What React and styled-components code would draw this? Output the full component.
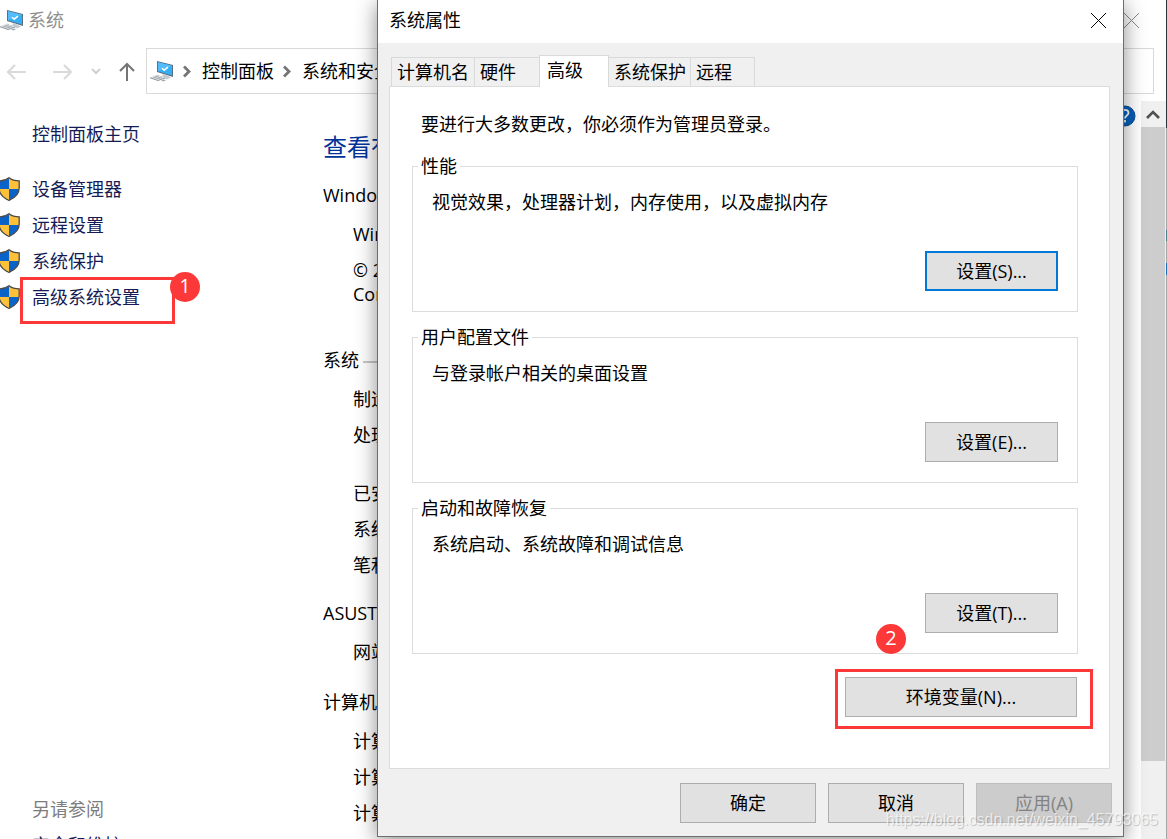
import React from "react";
import styled, { createGlobalStyle, css } from "styled-components";

const GlobalStyle = createGlobalStyle`
  * {
    box-sizing: border-box;
  }

  body {
    margin: 0;
    background: #fff;
    color: #000;
    font-family: "Open Sans", "Noto Sans CJK SC", sans-serif;
    font-size: 18px;
    line-height: 24px;
  }

  button {
    font: inherit;
  }
`;

const Desktop = styled.div`
  position: relative;
  display: flex;
  height: 100vh;
  overflow: hidden;
`;

const ControlPanel = styled.section`
  display: flex;
  flex: 1;
  flex-direction: column;
  min-width: 0;
`;

const DesktopEdge = styled.div`
  width: 1px;
  background: linear-gradient(
    #2c333c 128px,
    #a6a6a6 128px,
    #a6a6a6 230px,
    #4f7f8c 230px,
    #4f7f8c 241px,
    #a6a6a6 241px,
    #a6a6a6 263px,
    #1c6fb8 263px,
    #1c6fb8 275px,
    #a6a6a6 275px
  );
`;

const PanelTitle = styled.header`
  display: flex;
  align-items: center;
  height: 40px;
  padding-right: 26px;
  color: #8e8e8e;

  span {
    flex: 1;
    margin-left: 4px;
  }
`;

const IconButton = styled.button`
  display: flex;
  padding: 0;
  border: none;
  background: none;
  color: ${({ $color }) => $color || "#000"};
`;

const AddressRow = styled.div`
  display: flex;
  align-items: center;
  margin: 8px 12px 7px 0;
`;

const NavButtons = styled.div`
  display: flex;
  align-items: center;
  width: 146px;
  padding-left: 6px;
  gap: 27px;
`;

const HistoryGroup = styled.div`
  display: flex;
  align-items: center;
  gap: 18px;
`;

const AddressBar = styled.nav`
  display: flex;
  flex: 1;
  align-items: center;
  height: 46px;
  padding-left: 3px;
  gap: 9px;
  border: 1px solid #d9d9d9;
  white-space: nowrap;
  overflow: hidden;

  a {
    color: #000;
    text-decoration: none;
  }
`;

const PanelBody = styled.div`
  display: flex;
  flex: 1;
  min-height: 0;
  overflow: hidden;
`;

const Sidebar = styled.aside`
  width: 323px;
  padding-top: 21px;
`;

const SideLink = styled.a`
  display: block;
  padding-left: 32px;
  color: #151c55;
  text-decoration: none;
`;

const TaskList = styled.ul`
  margin: 25px 0 0;
  padding: 0;
  list-style: none;
`;

const Task = styled.li`
  position: relative;
  display: flex;
  align-items: center;
  height: 36px;

  svg {
    flex: none;
    margin-left: -2px;
  }

  a {
    padding-left: 10px;
  }
`;

const TaskMark = styled.span`
  position: absolute;
  top: -2px;
  left: 20px;
  width: 155px;
  height: 47px;
  border: 3px solid #fc3838;
`;

const StepBadge = styled.span`
  position: absolute;
  top: ${({ $top }) => $top}px;
  left: ${({ $left }) => $left}px;
  width: 30px;
  height: 30px;
  border-radius: 50%;
  background: #fc3838;
  color: #fff;
  font-size: 20px;
  line-height: 28px;
  text-align: center;
`;

const SeeAlso = styled.div`
  margin-top: 482px;

  p {
    margin: 0 0 12px;
    padding-left: 32px;
    color: #7d7d7d;
  }
`;

const Details = styled.main`
  position: relative;
  flex: 1;
  min-width: 0;
  padding-top: 30px;
  white-space: nowrap;
  overflow: hidden;
`;

const Heading = styled.h1`
  margin: 0 0 20px;
  color: #003399;
  font-size: 24px;
  font-weight: 400;
  line-height: 32px;
`;

const GroupTitle = styled.h2`
  display: flex;
  align-items: center;
  gap: 4px;
  margin: 0 40px 3px 0;
  font-size: 18px;
  font-weight: 400;

  ${({ $ruled }) =>
    $ruled &&
    css`
      &::after {
        content: "";
        flex: 1;
        height: 2px;
        margin-top: 4px;
        background: #c8c8c8;
      }
    `}
`;

const Group = styled.div`
  margin-bottom: ${({ $after }) => $after}px;
`;

const Detail = styled.p`
  margin: 0 0 0 30px;
  padding-top: ${({ $gap = 12 }) => $gap}px;
`;

const HelpButton = styled(IconButton)`
  position: absolute;
  top: 4px;
  right: 5px;
`;

const Scrollbar = styled.div`
  display: flex;
  flex-direction: column;
  width: 25px;
  padding-right: 1px;
  background: #f0f0f0;
`;

const ScrollUp = styled(IconButton)`
  align-items: center;
  justify-content: center;
  height: 26px;
  padding-top: 2px;
`;

const ScrollTrack = styled.div`
  flex: 1;
`;

const ScrollThumb = styled.div`
  height: 89%;
  background: #cdcdcd;
`;

const Dialog = styled.section`
  position: absolute;
  top: 0;
  left: 377px;
  right: 43px;
  border: 1px solid #6e6e6e;
  border-top: none;
  background: #f0f0f0;
  box-shadow: 0 4px 20px rgba(0, 0, 0, 0.45);
`;

const DialogTitle = styled.header`
  display: flex;
  align-items: center;
  justify-content: space-between;
  height: 43px;
  padding: 0 16px 3px 11px;
  background: #fff;
`;

const TabStrip = styled.div`
  display: flex;
  align-items: flex-end;
  height: 43px;
  padding-left: 13px;
`;

const Tab = styled.button`
  width: ${({ $width }) => $width}px;
  height: 29px;
  padding: 0 0 0 5px;
  border: 1px solid #d9d9d9;
  border-right-width: 0;
  border-bottom: none;
  background: #f0f0f0;
  color: #000;
  text-align: left;
  white-space: nowrap;

  &:last-child {
    border-right-width: 1px;
  }

  ${({ $active }) =>
    $active &&
    css`
      position: relative;
      height: 32px;
      margin-bottom: -1px;
      padding: 0 0 4px 7px;
      border-right-width: 1px;
      background: #fff;

      & + button {
        border-left-width: 0;
      }
    `}
`;

const TabPanel = styled.div`
  margin: 0 13px 0 11px;
  padding: 25px 16px 39px 22px;
  border: 1px solid #dcdcdc;
  background: #fff;
`;

const Notice = styled.p`
  margin: 0 0 18px 9px;
`;

const Section = styled.fieldset`
  min-width: 0;
  margin: 0 15px 13px 0;
  padding: 12px 19px 20px;
  border: 1px solid #dcdcdc;

  legend {
    margin-left: -14px;
    padding: 0 3px;
  }

  p {
    margin: 0 0 37px;
  }
`;

const ButtonRow = styled.div`
  display: flex;
  justify-content: flex-end;
`;

const DialogButtons = styled(ButtonRow)`
  gap: 12px;
  padding: 14px 11px 13px;
`;

const PushButton = styled.button`
  width: ${({ $width }) => $width}px;
  height: 40px;
  padding: 0;
  border: ${({ $focused }) => ($focused ? "2px solid #0078d7" : "1px solid #adadad")};
  background: #e1e1e1;
  color: #000;

  &:disabled {
    border-color: #bfbfbf;
    background: #cccccc;
    color: #838383;
  }
`;

const MarkedArea = styled.div`
  position: relative;
  margin-top: 2px;
  padding: 5px 13px 9px 7px;
  border: 3px solid #fc3838;
`;

const Watermark = styled.div`
  position: absolute;
  right: 9px;
  bottom: 9px;
  color: rgba(255, 255, 255, 0.7);
  font-family: "Liberation Sans", sans-serif;
  font-size: 16px;
  line-height: 20px;
  text-shadow: 1px 1px 1px rgba(0, 0, 0, 0.2);
`;

const ComputerIcon = () => (
  <svg width="24" height="24" viewBox="0 0 24 24" aria-hidden="true">
    <path d="M7 2L23 6V18L7 13Z" fill="#5b6f80" />
    <path d="M8 3.3L22 6.8V16.6L8 12.2Z" fill="#35aef5" />
    <path d="M8 3.3L22 6.8L8 12.2Z" fill="#52bdfa" />
    <path d="M12 9.200L14.200 11.200L18 8.200" fill="none" stroke="#fff" strokeWidth="1.5" />
    <path d="M13 15L17 16.2L21 18.6L17 20.4L12 18Z" fill="#c5cbd0" />
    <path d="M0 18.2L7 15.6L15 18.4L8 21Z" fill="#dfe3e6" />
    <path d="M0 18.2L8 21L15 18.4V19.4L8 22L0 19.2Z" fill="#8b949b" />
    <path d="M3 18.2L10 20M5 17.3L12 19.2M4 19L9 16.4M7 20L12 17.6" stroke="#9fa8af" strokeWidth="0.7" />
    <path d="M11 21.6L14 20.6L16 21.4L13 22.6Z" fill="#a3abb1" />
  </svg>
);

const ShieldIcon = () => (
  <svg width="24" height="26" viewBox="0 0 24 26" aria-hidden="true">
    <path d="M11 13V2C8.5 4 4.5 5 1 5V13Z" fill="#0a63c9" />
    <path d="M11 13V2C13.5 4 17.5 5 21 5V13Z" fill="#ffc03a" />
    <path d="M1 13H11V24.5C5 21.5 1.5 18 1 13Z" fill="#ffc03a" />
    <path d="M21 13H11V24.5C17 21.5 20.5 18 21 13Z" fill="#0a63c9" />
    <path
      d="M11 1.7C8.5 3.7 4.5 4.8 1 4.8V12C1 18 5 21.8 11 24.5C17 21.8 21.2 18 21.2 12V4.8C17.5 4.8 13.5 3.7 11 1.7Z"
      fill="none"
      stroke="#4d4a45"
      strokeWidth="1.3"
    />
  </svg>
);

const Arrow = ({ d, width = 20, color, stroke = 2.2 }) => (
  <svg width={width} height="20" viewBox={`0 0 ${width} 20`} fill="none" aria-hidden="true">
    <path d={d} stroke={color} strokeWidth={stroke} />
  </svg>
);

const Crumb = () => <Arrow width={10} d="M1 5.5L6 10.500L1 15.500" color="#757575" stroke={2.8} />;

const CloseIcon = () => (
  <svg width="17" height="17" viewBox="0 0 17 17" aria-hidden="true">
    <path d="M1 1L16 16M16 1L1 16" stroke="currentColor" strokeWidth="1" />
  </svg>
);

const tasks = ["设备管理器", "远程设置", "系统保护", "高级系统设置"];

const tabs = [
  { label: "计算机名", width: 83 },
  { label: "硬件", width: 65 },
  { label: "高级", width: 70, active: true },
  { label: "系统保护", width: 81 },
  { label: "远程", width: 65 },
];

const sections = [
  { title: "性能", text: "视觉效果，处理器计划，内存使用，以及虚拟内存", button: "设置(S)...", focused: true },
  { title: "用户配置文件", text: "与登录帐户相关的桌面设置", button: "设置(E)..." },
  { title: "启动和故障恢复", text: "系统启动、系统故障和调试信息", button: "设置(T)..." },
];

const SystemWindow = () => (
  <ControlPanel>
    <PanelTitle>
      <ComputerIcon />
      <span>系统</span>
      <IconButton $color="#888" aria-label="关闭系统">
        <CloseIcon />
      </IconButton>
    </PanelTitle>
    <AddressRow>
      <NavButtons>
        <IconButton aria-label="后退">
          <Arrow d="M20 11H2M9 4L2 11L9 18" color="#dadada" />
        </IconButton>
        <HistoryGroup>
          <IconButton aria-label="前进">
            <Arrow d="M0 11H18M11 4L18 11L11 18" color="#dadada" />
          </IconButton>
          <IconButton aria-label="最近位置">
            <Arrow width={10} d="M1 8L5 12L9 8" color="#d0d0d0" stroke={2} />
          </IconButton>
          <IconButton aria-label="向上">
            <Arrow width={16} d="M8 20V3M1 10L8 3L15 10" color="#757575" stroke={2} />
          </IconButton>
        </HistoryGroup>
      </NavButtons>
      <AddressBar>
        <ComputerIcon />
        <Crumb />
        <a href="#control-panel">控制面板</a>
        <Crumb />
        <a href="#security">系统和安全</a>
      </AddressBar>
    </AddressRow>
    <PanelBody>
      <Sidebar>
        <SideLink href="#home">控制面板主页</SideLink>
        <TaskList>
          {tasks.map((task, i) => (
            <Task key={task}>
              <ShieldIcon />
              <SideLink href={`#task-${i}`}>{task}</SideLink>
              {i === 3 && (
                <>
                  <TaskMark />
                  <StepBadge $top={-7} $left={170}>1</StepBadge>
                </>
              )}
            </Task>
          ))}
        </TaskList>
        <SeeAlso>
          <p>另请参阅</p>
          <SideLink href="#maintenance">安全和维护</SideLink>
        </SeeAlso>
      </Sidebar>
      <Details>
        <HelpButton aria-label="帮助">
          <svg width="22" height="22" viewBox="0 0 22 22" aria-hidden="true">
            <circle cx="11" cy="11" r="10" fill="#0560bd" stroke="#0a4a8c" />
            <path
              d="M7.5 8C7.5 3.8 14.5 3.8 14.5 8C14.5 10.5 11 10.5 11 13.5M11 15V17.5"
              fill="none"
              stroke="#fff"
              strokeWidth="1.8"
            />
          </svg>
        </HelpButton>
        <Heading>查看有关</Heading>
        <Group $after={42}>
          <GroupTitle>Windows</GroupTitle>
          <Detail>Windows</Detail>
          <Detail>© 2019</Detail>
          <Detail $gap={0}>Corp.</Detail>
        </Group>
        <Group $after={24}>
          <GroupTitle $ruled>系统</GroupTitle>
          <Detail>制造商</Detail>
          <Detail>处理器</Detail>
          <Detail $gap={34}>已安装</Detail>
          <Detail>系统类型</Detail>
          <Detail>笔和触控</Detail>
        </Group>
        <Group $after={26}>
          <GroupTitle>ASUSTek</GroupTitle>
          <Detail>网站</Detail>
        </Group>
        <Group $after={0}>
          <GroupTitle>计算机名</GroupTitle>
          <Detail>计算机</Detail>
          <Detail>计算机</Detail>
          <Detail>计算机</Detail>
        </Group>
      </Details>
      <Scrollbar>
        <ScrollUp aria-label="向上滚动">
          <svg width="14" height="10" viewBox="0 0 14 10" aria-hidden="true">
            <path d="M1 8L7 2L13 8" fill="none" stroke="#505050" strokeWidth="2.6" />
          </svg>
        </ScrollUp>
        <ScrollTrack>
          <ScrollThumb />
        </ScrollTrack>
      </Scrollbar>
    </PanelBody>
  </ControlPanel>
);

const PropertiesDialog = () => (
  <Dialog role="dialog" aria-label="系统属性">
    <DialogTitle>
      <span>系统属性</span>
      <IconButton aria-label="关闭">
        <CloseIcon />
      </IconButton>
    </DialogTitle>
    <TabStrip role="tablist">
      {tabs.map(({ label, width, active }) => (
        <Tab key={label} role="tab" aria-selected={!!active} $width={width} $active={active}>
          {label}
        </Tab>
      ))}
    </TabStrip>
    <TabPanel role="tabpanel">
      <Notice>要进行大多数更改，你必须作为管理员登录。</Notice>
      {sections.map(({ title, text, button, focused }) => (
        <Section key={title}>
          <legend>{title}</legend>
          <p>{text}</p>
          <ButtonRow>
            <PushButton $width={133} $focused={focused}>{button}</PushButton>
          </ButtonRow>
        </Section>
      ))}
      <ButtonRow>
        <MarkedArea>
          <PushButton $width={232}>环境变量(N)...</PushButton>
          <StepBadge $top={-48} $left={38}>2</StepBadge>
        </MarkedArea>
      </ButtonRow>
    </TabPanel>
    <DialogButtons>
      <PushButton $width={136}>确定</PushButton>
      <PushButton $width={136}>取消</PushButton>
      <PushButton $width={136} disabled>应用(A)</PushButton>
    </DialogButtons>
  </Dialog>
);

const App = () => (
  <>
    <GlobalStyle />
    <Desktop>
      <SystemWindow />
      <DesktopEdge />
      <PropertiesDialog />
      <Watermark>https://blog.csdn.net/weixin_45793065</Watermark>
    </Desktop>
  </>
);

export default App;
